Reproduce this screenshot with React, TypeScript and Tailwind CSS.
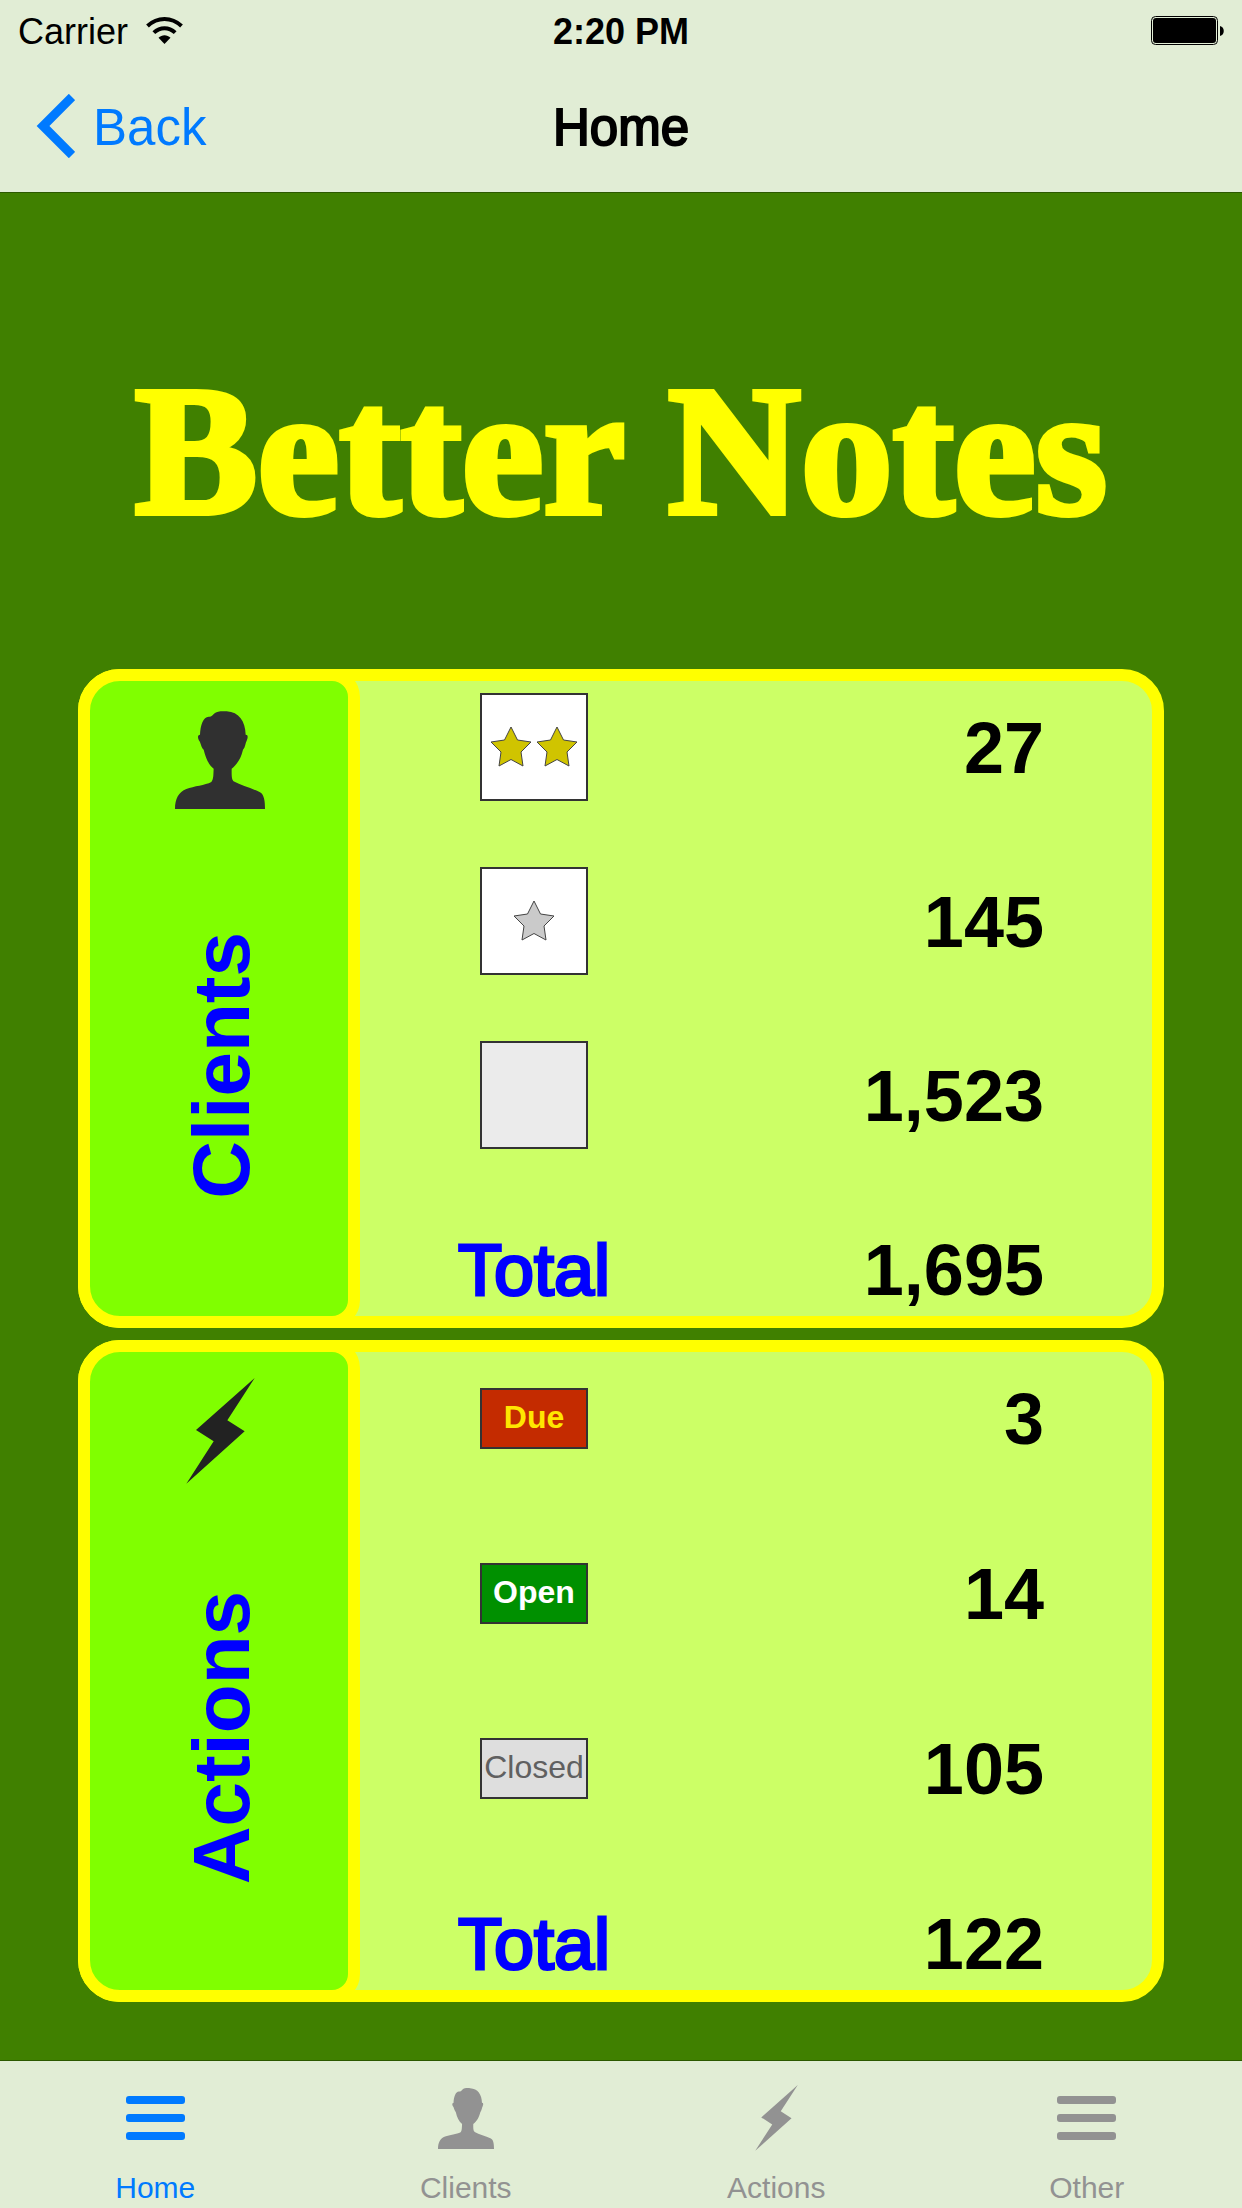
import type { ReactNode } from 'react';

function PersonIcon({ className }: { className: string }) {
  return (
    <svg viewBox="315 150 270 293" preserveAspectRatio="none" className={className} fill="currentColor" aria-hidden="true">
      <path d="M315 443C315 412 326 392 349 383C372 374 405 372 424 362C431 356 430 338 431 323C415 309 407 291 401 266C393 258 392 243 387 238C383 231 382 222 390 221C391 193 400 166 417 167C423 168 428 163 432 158C441 150 457 150 470 151C507 153 526 181 527 221C535 221 534 230 530 239C526 246 526 259 519 266C512 294 502 308 485 323C485 341 484 356 492 361C513 373 544 380 570 393C583 400 585 421 585 443Z" />
    </svg>
  );
}

function BoltIcon({ className }: { className: string }) {
  return (
    <svg viewBox="349 414 207 318" className={className} fill="currentColor" aria-hidden="true">
      <path d="M555 414L473 541L525 574L350 731L432 604L379 570Z" />
    </svg>
  );
}

function MenuIcon({ className }: { className: string }) {
  return (
    <svg viewBox="0 0 59 44" className={className} fill="currentColor" aria-hidden="true">
      <rect width="59" height="8" rx="3" />
      <rect y="18" width="59" height="8" rx="3" />
      <rect y="36" width="59" height="8" rx="3" />
    </svg>
  );
}

function WifiIcon() {
  return (
    <svg viewBox="0 0 110 81" className="h-[27px] w-[37px]" aria-label="Wi-Fi">
      <g fill="none" stroke="#000" strokeWidth="12">
        <path d="M4 27C34 -1 76 -1 106 27" />
        <path d="M23 47C42 29 68 29 87 47" />
      </g>
      <path d="M37 62C47 52 63 52 73 62L55 81Z" />
    </svg>
  );
}

function BatteryIcon() {
  return (
    <svg viewBox="0 0 73 29" className="h-[29px] w-[73px]" aria-label="Battery full">
      <rect x="0.5" y="0.5" width="66" height="28" rx="4" fill="none" stroke="#000" />
      <rect x="2" y="2" width="63" height="25" rx="3" />
      <path d="M69 10C74 11 74 19 69 20Z" />
    </svg>
  );
}

function Star({ fill }: { fill: string }) {
  return (
    <svg viewBox="0 0 42 41" className="h-[41px] w-[42px]" aria-hidden="true">
      <path
        d="M21 1L27.5 14L41 16L31 26L33 40L21 33.5L9 40L11 26L1 16L14.5 14Z"
        fill={fill}
        stroke="#444"
      />
    </svg>
  );
}

function Rating({ label, className, children }: { label: string; className: string; children?: ReactNode }) {
  return (
    <span
      role="img"
      aria-label={label}
      className={`flex h-[108px] w-[108px] shrink-0 items-center justify-center gap-1 border-2 border-[#333] pb-[2px] ${className}`}
    >
      {children}
    </span>
  );
}

function Tag({ className, children }: { className: string; children: ReactNode }) {
  return (
    <span className={`flex h-[61px] w-[108px] items-center justify-center border-2 border-[#333] pb-[2px] text-[32px] leading-none ${className}`}>
      {children}
    </span>
  );
}

const total = <span className="pt-[2px] text-[72px] leading-none text-[#0000ff] [-webkit-text-stroke:3px_#0000ff]">Total</span>;

function Card({ title, icon, gap, rows }: { title: string; icon: ReactNode; gap: string; rows: [ReactNode, string][] }) {
  return (
    <section className="flex rounded-[42px] border-12 border-[#ffff00] bg-[#ccff66]">
      <div className="-m-3 flex w-[282px] shrink-0 flex-col items-center rounded-l-[42px] rounded-r-[28px] border-12 border-[#ffff00] bg-[#80ff00] pl-[2px]">
        <div className="flex h-[133px] items-center pt-6">{icon}</div>
        <div className="flex flex-1 items-center justify-center pl-1">
          <h2 className="rotate-180 text-[80px] leading-none font-bold text-[#0000ff] [writing-mode:vertical-rl]">{title}</h2>
        </div>
      </div>
      <dl className={`flex flex-1 flex-col pt-[19px] pr-[108px] pl-[106px] ${gap}`}>
        {rows.map(([label, value]) => (
          <div key={value} className="flex h-[94px] items-center justify-between">
            <dt className="flex w-[160px] items-center justify-center">{label}</dt>
            <dd className="pt-[2px] text-[72px] leading-none font-bold">{value}</dd>
          </div>
        ))}
      </dl>
    </section>
  );
}

const tabs = [
  { name: 'Home', icon: <MenuIcon className="h-[44px] w-[59px]" />, active: true },
  { name: 'Clients', icon: <PersonIcon className="h-[61px] w-[56px]" />, active: false },
  { name: 'Actions', icon: <BoltIcon className="h-[66px] w-[43px]" />, active: false },
  { name: 'Other', icon: <MenuIcon className="h-[44px] w-[59px]" />, active: false },
];

export default function App() {
  return (
    <div className="flex min-h-screen flex-col bg-[#408000] font-['Liberation_Sans',Arial,sans-serif] text-black">
      <header className="border-b border-[#2c5900] bg-[#e1edd5]">
        <div className="grid h-[60px] grid-cols-3 items-center pr-[18px] pl-[18px] text-[36px] leading-none">
          <div className="flex items-center gap-[18px]">
            <span className="pt-1">Carrier</span>
            <WifiIcon />
          </div>
          <span className="pt-1 text-center font-bold">2:20 PM</span>
          <span className="justify-self-end">
            <BatteryIcon />
          </span>
        </div>
        <div className="grid h-[132px] grid-cols-3 items-center px-9 text-[51px] leading-none">
          <button type="button" className="flex items-center gap-[18px] text-[#007aff]">
            <svg viewBox="0 0 39 64" className="h-[64px] w-[39px]" fill="none" stroke="currentColor" strokeWidth="9" aria-hidden="true">
              <path d="M36 3L7 32L36 61" />
            </svg>
            <span className="pt-[2px]">Back</span>
          </button>
          <h1 className="pt-[2px] text-center [-webkit-text-stroke:2px_#000]">Home</h1>
        </div>
      </header>

      <main className="flex flex-1 flex-col px-[78px] pb-14">
        <div className="flex h-[476px] items-center justify-center pt-10">
          <p className="text-[184px] leading-none font-bold whitespace-nowrap text-[#ffff00] font-['Liberation_Serif','Times_New_Roman',serif] [-webkit-text-stroke:6px_#ffff00]">
            Better Notes
          </p>
        </div>
        <div className="flex flex-col gap-3">
          <Card
            title="Clients"
            icon={<PersonIcon className="h-[98px] w-[90px] text-[#303030]" />}
            gap="gap-20"
            rows={[
              [<Rating label="Two stars" className="bg-white"><Star fill="#d0c400" /><Star fill="#d0c400" /></Rating>, '27'],
              [<Rating label="One star" className="bg-white"><Star fill="#cacaca" /></Rating>, '145'],
              [<Rating label="No stars" className="bg-[#ebebeb]" />, '1,523'],
              [total, '1,695'],
            ]}
          />
          <Card
            title="Actions"
            icon={<BoltIcon className="h-[106px] w-[69px] text-[#222]" />}
            gap="gap-[81px]"
            rows={[
              [<Tag className="bg-[#c42b00] font-bold text-[#ffe600]">Due</Tag>, '3'],
              [<Tag className="bg-[#009000] font-bold text-white">Open</Tag>, '14'],
              [<Tag className="bg-[#dedede] text-[#606060]">Closed</Tag>, '105'],
              [total, '122'],
            ]}
          />
        </div>
      </main>

      <nav aria-label="Main" className="grid h-[148px] grid-cols-4 border-t border-[#2c5900] bg-[#e1edd5]">
        {tabs.map((tab) => (
          <a
            key={tab.name}
            href={`#${tab.name.toLowerCase()}`}
            aria-current={tab.active ? 'page' : undefined}
            className={`flex flex-col items-center gap-[15px] pt-5 text-[30px] leading-9 ${tab.active ? 'text-[#007aff]' : 'text-[#929292]'}`}
          >
            <span className="flex h-[74px] items-center">{tab.icon}</span>
            {tab.name}
          </a>
        ))}
      </nav>
    </div>
  );
}
